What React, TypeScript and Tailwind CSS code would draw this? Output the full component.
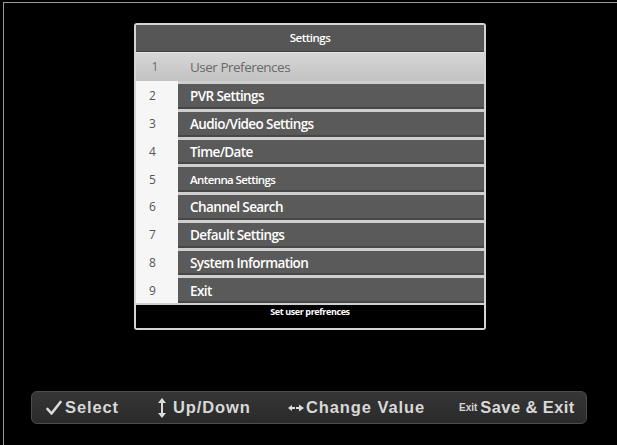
import React from 'react';

const items = [
  'PVR Settings',
  'Audio/Video Settings',
  'Time/Date',
  'Antenna Settings',
  'Channel Search',
  'Default Settings',
  'System Information',
  'Exit',
];

const CheckIcon = () => (
  <svg width="16" height="16" viewBox="0 0 16 16" className="shrink-0">
    <path d="M1.5 9 L5.5 13.5 L14.5 2" fill="none" stroke="#dcdcdc" strokeWidth="2.6" strokeLinecap="round" strokeLinejoin="round" />
  </svg>
);

const UpDownIcon = () => (
  <svg width="10" height="22" viewBox="0 0 10 22" className="shrink-0">
    <path d="M5 1 L9 6 L1 6 Z" fill="#dcdcdc" />
    <rect x="4" y="6" width="2" height="10" fill="#dcdcdc" />
    <path d="M5 21 L9 16 L1 16 Z" fill="#dcdcdc" />
  </svg>
);

const LeftRightIcon = () => (
  <svg width="18" height="10" viewBox="0 0 18 10" className="shrink-0">
    <path d="M1 5 L5 2 L5 8 Z" fill="#dcdcdc" />
    <rect x="5" y="4" width="3" height="2" fill="#dcdcdc" />
    <rect x="9" y="4" width="4" height="2" fill="#dcdcdc" />
    <path d="M17 5 L12 1.5 L12 8.5 Z" fill="#dcdcdc" />
  </svg>
);

export default function App() {
  return (
    <div className="w-[617px] h-[445px] bg-black overflow-hidden">
      <div className="mt-[2px] ml-[3px] h-[443px] border-t border-l border-[#9a9a9a] flex flex-col">
        {/* settings panel */}
        <div className="mt-[20px] ml-[130px] w-[352px] border-2 border-[#d4d4d4] rounded-[3px] bg-black flex flex-col font-['Open_Sans',sans-serif]">
          <div className="h-[27px] bg-[#565656] border-b border-[#3c3c3c] flex items-center justify-center text-[11.5px] font-semibold text-white tracking-[-0.5px]">
            Settings
          </div>
          <div className="h-[29px] border-t border-[#e6e6e6] bg-gradient-to-b from-[#d6d6d6] to-[#c2c2c2] flex items-center text-[#6a6a6a]">
            <div className="w-[38px] text-center text-[12px]">1</div>
            <div className="pl-[16px] text-[13.5px] tracking-[-0.5px]">User Preferences</div>
          </div>
          <div className="h-[222px] flex flex-col">
            {items.map((label, i) => (
              <div key={label} className="flex-1 flex">
                <div className="w-[42px] bg-[#f6f6f6] flex items-center pl-[13px] text-[12px] text-[#555] pt-[3px]">
                  {i + 2}
                </div>
                <div className="flex-1 border-t-[3px] border-[#cfcfcf] bg-[#5a5a5a] shadow-[inset_0_-2px_0_#474747] flex items-center pl-[12px]">
                  <span
                    className={
                      label === 'Antenna Settings'
                        ? 'text-[11.5px] font-semibold text-white tracking-[-0.6px]'
                        : 'text-[13.5px] font-semibold text-white tracking-[-0.6px]'
                    }
                  >
                    {label}
                  </span>
                </div>
              </div>
            ))}
          </div>
          <div className="h-[25px] border-t-2 border-[#cfcfcf] bg-black flex justify-center">
            <span className="text-[9px] font-bold text-white tracking-[-0.4px]">Set user prefrences</span>
          </div>
        </div>

        {/* key hint bar */}
        <div className="mt-[61px] ml-[27px] w-[556px] h-[33px] rounded-[6px] border border-[#4d4d4d] bg-gradient-to-b from-[#363636] to-[#2a2a2a] flex items-center font-['Liberation_Sans',Arial,sans-serif] font-bold text-[16.5px] text-[#d8d8d8] tracking-[0.9px]">
          <div className="w-[125px] pl-[14px] flex items-center gap-[3px]">
            <CheckIcon />
            <span>Select</span>
          </div>
          <div className="w-[130px] flex items-center gap-[6px]">
            <UpDownIcon />
            <span>Up/Down</span>
          </div>
          <div className="w-[172px] flex items-center gap-[1px]">
            <LeftRightIcon />
            <span>Change Value</span>
          </div>
          <div className="flex-1 flex items-center">
            <span className="text-[10px] self-start mt-[5px] mr-[3px] tracking-[0px]">Exit</span>
            <span className="tracking-[0.4px]">Save &amp; Exit</span>
          </div>
        </div>
      </div>
    </div>
  );
}
